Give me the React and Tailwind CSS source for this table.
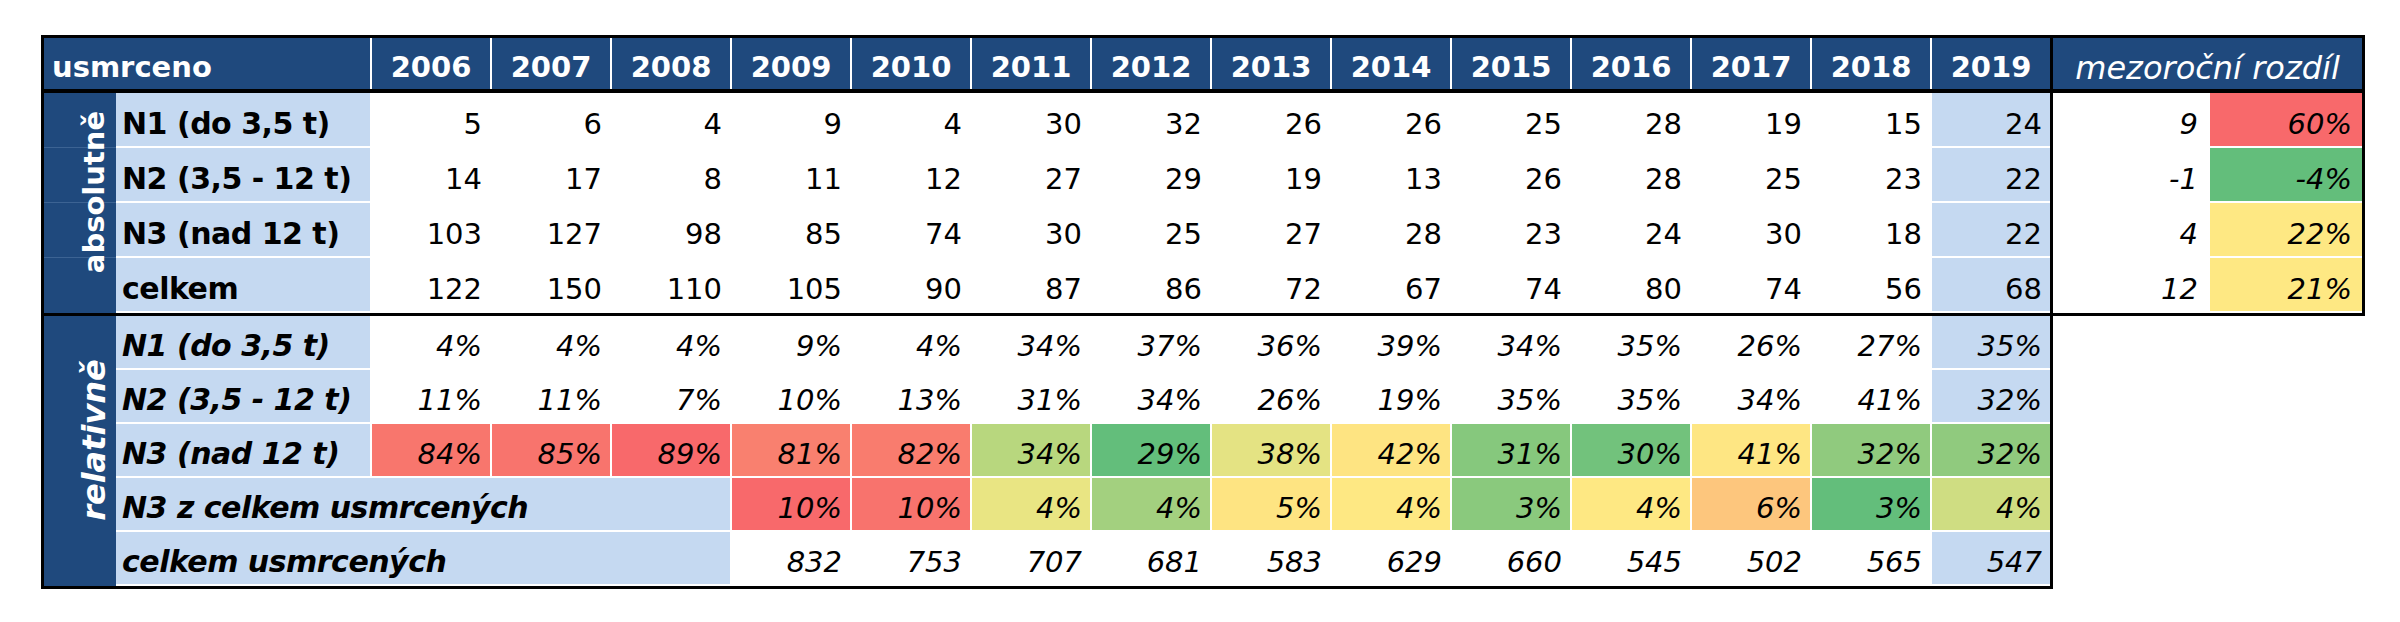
import React from "react";

const years = [2006, 2007, 2008, 2009, 2010, 2011, 2012, 2013, 2014, 2015, 2016, 2017, 2018, 2019];

// excel colour scale
const RED = "bg-[#f8696b]";
const BLUE = "bg-[#c5d9f1]";

const absRows = [
  { label: "N1 (do 3,5 t)", values: [5, 6, 4, 9, 4, 30, 32, 26, 26, 25, 28, 19, 15, 24] },
  { label: "N2 (3,5 - 12 t)", values: [14, 17, 8, 11, 12, 27, 29, 19, 13, 26, 28, 25, 23, 22] },
  { label: "N3 (nad 12 t)", values: [103, 127, 98, 85, 74, 30, 25, 27, 28, 23, 24, 30, 18, 22] },
  { label: "celkem", values: [122, 150, 110, 105, 90, 87, 86, 72, 67, 74, 80, 74, 56, 68] },
];

const diffRows = [
  { v: "9", p: "60%", bg: RED },
  { v: "-1", p: "-4%", bg: "bg-[#63be7b]" },
  { v: "4", p: "22%", bg: "bg-[#fee883]" },
  { v: "12", p: "21%", bg: "bg-[#fee883]" },
];

const relRows = [
  {
    label: "N1 (do 3,5 t)",
    cells: ["4%", "4%", "4%", "9%", "4%", "34%", "37%", "36%", "39%", "34%", "35%", "26%", "27%", "35%"].map(
      (v, i) => ({ v, bg: i === 13 ? BLUE : "" })
    ),
  },
  {
    label: "N2 (3,5 - 12 t)",
    cells: ["11%", "11%", "7%", "10%", "13%", "31%", "34%", "26%", "19%", "35%", "35%", "34%", "41%", "32%"].map(
      (v, i) => ({ v, bg: i === 13 ? BLUE : "" })
    ),
  },
  {
    label: "N3 (nad 12 t)",
    cells: [
      { v: "84%", bg: "bg-[#f8766d]" },
      { v: "85%", bg: "bg-[#f8746d]" },
      { v: "89%", bg: RED },
      { v: "81%", bg: "bg-[#f9806f]" },
      { v: "82%", bg: "bg-[#f97c6e]" },
      { v: "34%", bg: "bg-[#b8d77e]" },
      { v: "29%", bg: "bg-[#63be7b]" },
      { v: "38%", bg: "bg-[#e4e383]" },
      { v: "42%", bg: "bg-[#fee482]" },
      { v: "31%", bg: "bg-[#86c87d]" },
      { v: "30%", bg: "bg-[#72c27c]" },
      { v: "41%", bg: "bg-[#fee683]" },
      { v: "32%", bg: "bg-[#90ca7e]" },
      { v: "32%", bg: "bg-[#90ca7e]" },
    ],
  },
  {
    label: "N3 z celkem usmrcených",
    span: true,
    cells: [
      { v: "10%", bg: RED },
      { v: "10%", bg: "bg-[#f8736d]" },
      { v: "4%", bg: "bg-[#e9e583]" },
      { v: "4%", bg: "bg-[#a3d07f]" },
      { v: "5%", bg: "bg-[#fee482]" },
      { v: "4%", bg: "bg-[#fee883]" },
      { v: "3%", bg: "bg-[#8ac97d]" },
      { v: "4%", bg: "bg-[#fee883]" },
      { v: "6%", bg: "bg-[#fdc67d]" },
      { v: "3%", bg: "bg-[#63be7b]" },
      { v: "4%", bg: "bg-[#cfdd82]" },
    ],
  },
  {
    label: "celkem usmrcených",
    span: true,
    cells: [832, 753, 707, 681, 583, 629, 660, 545, 502, 565, 547].map((v, i) => ({
      v,
      bg: i === 10 ? BLUE : "",
    })),
  },
];

const Value = ({ children, bg = "" }) => (
  <div
    className={`w-[120px] h-full border-l-2 border-b-2 border-white flex items-end justify-end pr-2 pb-[6px] leading-8 ${bg}`}
  >
    {children}
  </div>
);

const AbsRow = ({ label, values }) => (
  <div className="flex h-[55px]">
    <div className={`w-[254px] h-full ${BLUE} border-b-2 border-white flex items-end pl-[6px] pb-[6px] leading-8 font-bold text-[30px] tracking-[-0.5px] whitespace-nowrap`}>
      {label}
    </div>
    {values.map((v, i) => (
      <Value key={i} bg={i === 13 ? BLUE : ""}>
        {v}
      </Value>
    ))}
  </div>
);

const RelRow = ({ label, cells, span }) => (
  <div className="flex h-[54px] italic">
    <div
      className={`${span ? "w-[614px]" : "w-[254px]"} h-full ${BLUE} border-b-2 border-white flex items-end pl-[6px] pb-[6px] leading-8 font-bold text-[30px] tracking-[-0.5px] whitespace-nowrap`}
    >
      {label}
    </div>
    {cells.map((c, i) => (
      <Value key={i} bg={c.bg}>
        {c.v}
      </Value>
    ))}
  </div>
);

const SideLabel = ({ text, lines, italic }) => (
  <div className="relative w-[72px] h-full bg-[#1f497d]">
    {lines && (
      <div className="flex flex-col h-full">
        <div className="h-[55px] border-b border-[#3c6393]" />
        <div className="h-[55px] border-b border-[#3c6393]" />
        <div className="h-[55px] border-b border-[#3c6393]" />
      </div>
    )}
    <div className="absolute inset-0 flex items-center justify-center pl-7 pb-[22px]">
      <span
        className={`-rotate-90 whitespace-nowrap text-white font-bold leading-8 ${italic ? "italic text-[32px]" : "text-[29px]"}`}
      >
        {text}
      </span>
    </div>
  </div>
);

export default function App() {
  return (
    <div className="w-[2400px] h-[622px] bg-white pt-[35px] pl-[41px] flex items-start font-['DejaVu_Sans',sans-serif] text-[29px] text-black">
      {/* hlavní tabulka */}
      <div className="border-[3px] border-black flex flex-col">
        <div className="flex h-[55px] bg-[#1f497d] border-b-4 border-black text-white font-bold">
          <div className="w-[326px] flex items-end pl-2 pb-[6px] leading-8">usmrceno</div>
          {years.map((y) => (
            <div key={y} className="w-[120px] border-l-2 border-white flex items-end justify-center pb-[6px] leading-8">
              {y}
            </div>
          ))}
        </div>

        <div className="flex h-[223px] border-b-[3px] border-black">
          <SideLabel text="absolutně" lines />
          <div className="flex flex-col">
            {absRows.map((r) => (
              <AbsRow key={r.label} {...r} />
            ))}
          </div>
        </div>

        <div className="flex h-[270px]">
          <SideLabel text="relativně" italic />
          <div className="flex flex-col">
            {relRows.map((r) => (
              <RelRow key={r.label} {...r} />
            ))}
          </div>
        </div>
      </div>

      {/* meziroční rozdíl */}
      <div className="w-[312px] border-y-[3px] border-r-[3px] border-black flex flex-col">
        <div className="h-[55px] bg-[#1f497d] border-b-4 border-black text-white italic text-[32px] flex items-end justify-center pb-[5px] leading-8">
          mezoroční rozdíl
        </div>
        {diffRows.map((r) => (
          <div key={r.v} className="flex h-[55px] italic">
            <div className="w-[157px] h-full border-b-2 border-white flex items-end justify-end pr-3 pb-[6px] leading-8">
              {r.v}
            </div>
            <div className={`w-[152px] h-full border-b-2 border-white flex items-end justify-end pr-[10px] pb-[6px] leading-8 ${r.bg}`}>
              {r.p}
            </div>
          </div>
        ))}
      </div>
    </div>
  );
}
